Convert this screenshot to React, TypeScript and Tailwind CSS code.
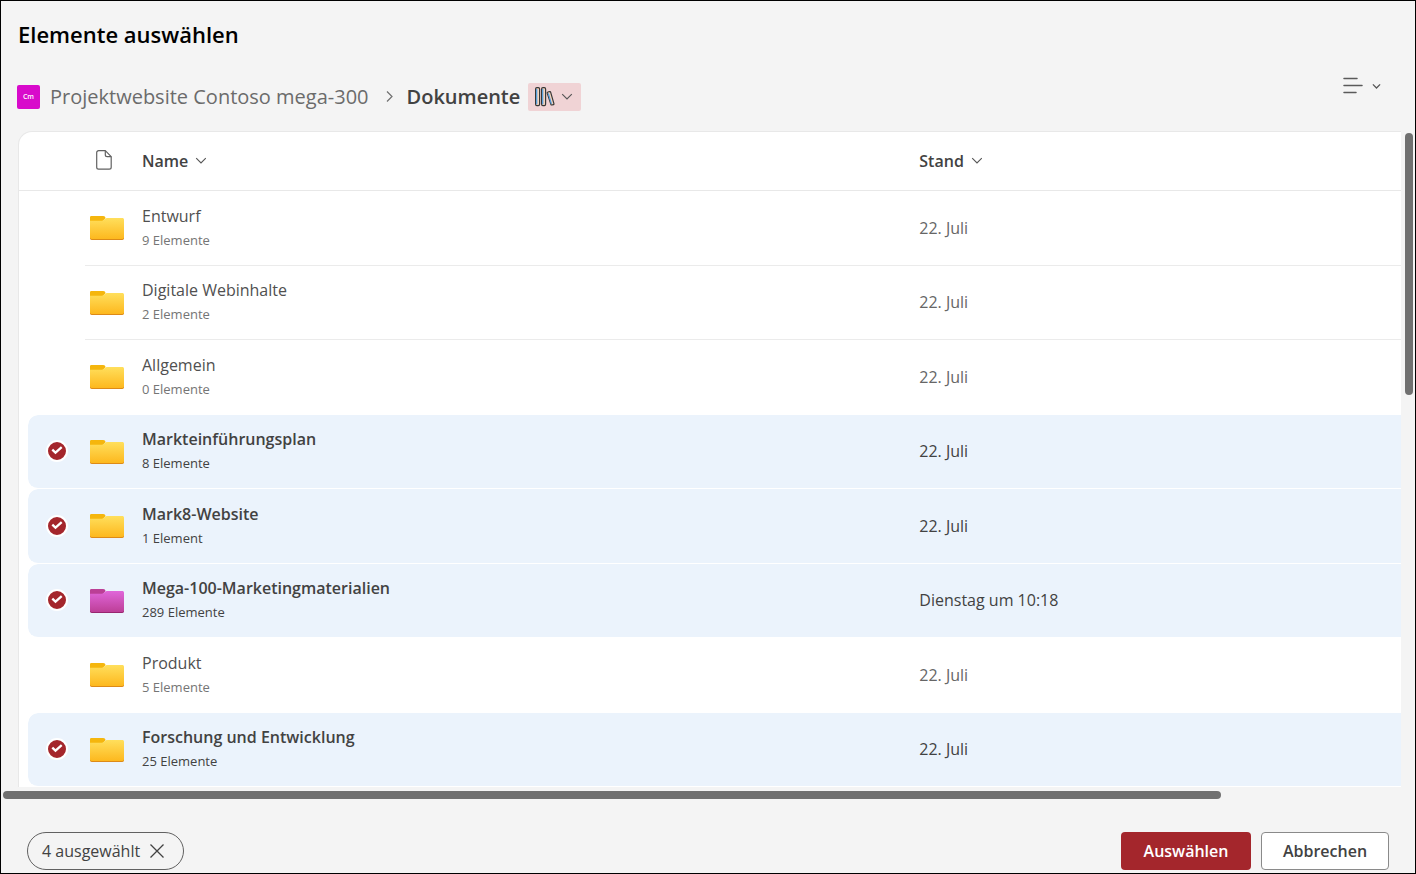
import { useState } from "react";

type Item = {
  name: string;
  count: string;
  modified: string;
  tint: "yellow" | "pink";
  selected: boolean;
};

const initialItems: Item[] = [
  { name: "Entwurf", count: "9 Elemente", modified: "22. Juli", tint: "yellow", selected: false },
  { name: "Digitale Webinhalte", count: "2 Elemente", modified: "22. Juli", tint: "yellow", selected: false },
  { name: "Allgemein", count: "0 Elemente", modified: "22. Juli", tint: "yellow", selected: false },
  { name: "Markteinführungsplan", count: "8 Elemente", modified: "22. Juli", tint: "yellow", selected: true },
  { name: "Mark8-Website", count: "1 Element", modified: "22. Juli", tint: "yellow", selected: true },
  { name: "Mega-100-Marketingmaterialien", count: "289 Elemente", modified: "Dienstag um 10:18", tint: "pink", selected: true },
  { name: "Produkt", count: "5 Elemente", modified: "22. Juli", tint: "yellow", selected: false },
  { name: "Forschung und Entwicklung", count: "25 Elemente", modified: "22. Juli", tint: "yellow", selected: true },
];

const folderColors = {
  yellow: { tab: "#f5b60d", top: "#ffdf5c", bottom: "#fdb81e", edge: "#dd8a17" },
  pink: { tab: "#bb3f96", top: "#e066da", bottom: "#bd3f97", edge: "#98256f" },
};

function FolderIcon({ tint }: { tint: "yellow" | "pink" }) {
  const c = folderColors[tint];
  return (
    <svg className="block" width="34" height="25" viewBox="0 0 34 25" aria-hidden="true">
      <defs>
        <linearGradient id={`folder-${tint}`} x1="0" y1="0" x2="0" y2="1">
          <stop offset="0" stopColor={c.top} />
          <stop offset="1" stopColor={c.bottom} />
        </linearGradient>
      </defs>
      <path d="M0 8V2.300C0 1.400.7.900 1.500.900h11.700c.6 0 1.200.2 1.600.7l.8 1.500L13 6Z" fill={c.tab} />
      <path d="M0 10h34v13.300c0 1-.7 1.700-1.700 1.700H1.700C.7 25 0 24.300 0 23.300Z" fill={c.edge} />
      <path
        d="M0 5.800h11.800c.7 0 1.200-.2 1.700-.7l1.700-1.400c.5-.5 1-.7 1.700-.7h15.400c1 0 1.700.7 1.700 1.700v17.600c0 1-.7 1.700-1.700 1.700H1.700C.7 24 0 23.300 0 22.300Z"
        fill={`url(#folder-${tint})`}
      />
    </svg>
  );
}

function Chevron({ size = 12, stroke = 1.1 }: { size?: number; stroke?: number }) {
  return (
    <svg width={size} height={size} viewBox="0 0 12 12" fill="none" stroke="#555" strokeWidth={stroke} aria-hidden="true">
      <path d="M1.200 3.200 6 8l4.800-4.800" />
    </svg>
  );
}

export default function App() {
  const [items, setItems] = useState(initialItems);
  const selectedCount = items.filter((i) => i.selected).length;
  const toggle = (index: number) =>
    setItems(items.map((item, i) => (i === index ? { ...item, selected: !item.selected } : item)));
  const clear = () => setItems(items.map((item) => ({ ...item, selected: false })));

  return (
    <main className="flex h-screen flex-col border border-black bg-[#f4f4f4] font-['Open_Sans','Noto_Sans',sans-serif] text-[#424242]">
      <header className="flex shrink-0 flex-col px-4 pt-[15px]">
        <h1 className="pl-px text-[22px] leading-9 font-semibold text-black">Elemente auswählen</h1>
        <div className="flex items-start justify-between pt-6 pr-[18px]">
          <nav aria-label="Pfad" className="flex h-[42px] items-center text-xl">
            <span className="mr-[10px] flex h-6 w-[23px] items-center justify-center rounded-xs bg-[#d80acb] text-[7px] font-semibold text-white">
              Cm
            </span>
            <a href="#" className="text-[#6b6b6b]">Projektwebsite Contoso mega-300</a>
            <svg className="mr-3 ml-4 text-[#707070]" width="10" height="14" viewBox="0 0 10 14" fill="none" stroke="currentColor" aria-hidden="true">
              <path d="m2 1.500 5 5-5 5" strokeWidth="1.200" />
            </svg>
            <span className="font-semibold">Dokumente</span>
            <button type="button" aria-label="Bibliothek wechseln" className="ml-2 flex h-7 w-[53px] items-center gap-[6px] rounded-xs bg-[#f0d3d5] pl-[7px]">
              <svg width="20" height="20" viewBox="0 0 20 20" fill="#f3d3bd" stroke="#383838" strokeWidth="1.200" aria-hidden="true">
                <rect x=".6" y=".6" width="4" height="18" rx="1.300" />
                <rect x="6.600" y=".6" width="4" height="18" rx="1.300" />
                <path d="m12.900 5 1.700-.4c.6-.1 1 .1 1.100.7l3.200 11.300c.1.600-.1 1-.7 1.100l-1.200.3c-.6.1-1-.1-1.100-.7L12.200 6.200c-.1-.6.1-1.100.7-1.200Z" />
                <path d="M1.700 2v15.200M7.700 2v15.200M13.300 6.300l3.100 10.500" stroke="#4c9ee3" />
              </svg>
              <Chevron />
            </button>
          </nav>
          <button type="button" aria-label="Ansichtsoptionen" className="flex h-5 items-center gap-[9px]">
            <svg width="20" height="18" viewBox="0 0 20 18" stroke="#5a5a5a" strokeWidth="1.500" strokeLinecap="round" aria-hidden="true">
              <path d="M1 1.500h13M1 8.500h18M1 15.500h12" />
            </svg>
            <Chevron size={9} stroke={1.7} />
          </button>
        </div>
      </header>

      <div className="flex min-h-0 flex-1 pt-[13px] pl-[17px]">
        <div className="min-w-0 flex-1 overflow-hidden rounded-tl-[14px] border-t border-l border-[#e8e8e8] bg-white">
          <table className="h-full w-full table-fixed border-separate border-spacing-0 text-left">
            <colgroup>
              <col className="w-[9px]" />
              <col className="w-[57px]" />
              <col className="w-[57px]" />
              <col />
              <col className="w-[35%]" />
            </colgroup>
            <thead>
              <tr className="h-[59px] [&>*]:border-b [&>*]:border-[#e8e8e8]">
                <td />
                <td />
                <th scope="col" aria-label="Dateityp" className="pb-[2px] pl-[11px]">
                  <svg className="block" width="16" height="20" viewBox="0 0 16 20" fill="none" stroke="#616161" strokeWidth="1.200" strokeLinejoin="round" aria-hidden="true">
                    <path d="M2.600.7h6.700l5.900 5.900v10.700c0 1-.8 1.900-1.900 1.900H2.600c-1 0-1.900-.9-1.900-1.900V2.600C.7 1.500 1.600.7 2.600.7Z" />
                    <path d="M9.300.7v4c0 1 .8 1.900 1.900 1.900h4" />
                  </svg>
                </th>
                <th scope="col">
                  <button type="button" className="flex items-center gap-[7px] text-base font-semibold">
                    Name
                    <Chevron />
                  </button>
                </th>
                <th scope="col" className="pl-[2px]">
                  <button type="button" className="flex items-center gap-[7px] text-base font-semibold">
                    Stand
                    <Chevron />
                  </button>
                </th>
              </tr>
            </thead>
            <tbody>
              {items.map((item, index) => {
                const next = items[index + 1];
                const line = !item.selected && next && !next.selected;
                const cell = item.selected
                  ? "border-b border-transparent bg-[#ebf3fc] bg-clip-padding"
                  : line
                    ? "border-b border-[#ebebeb]"
                    : "border-b border-transparent";
                return (
                  <tr key={item.name} className="h-[74px]">
                    <td />
                    <td
                      className={
                        item.selected
                          ? "rounded-l-[10px] border-b border-transparent bg-[#ebf3fc] bg-clip-padding pl-[18px]"
                          : "border-b border-transparent pl-[18px]"
                      }
                    >
                      <label className="relative block size-[22px]">
                        <input
                          type="checkbox"
                          aria-label={item.name}
                          checked={item.selected}
                          onChange={() => toggle(index)}
                          className="block size-[22px] appearance-none rounded-full border-2 border-transparent checked:border-white checked:bg-[#a4262c]"
                        />
                        {item.selected && (
                          <svg className="pointer-events-none absolute inset-0" width="22" height="22" viewBox="0 0 22 22" fill="none" stroke="#fff" strokeWidth="2.300" aria-hidden="true">
                            <path d="m6.300 9.600 3.200 3 6.200-5.500" />
                          </svg>
                        )}
                      </label>
                    </td>
                    <td className={`${cell} pl-[5px]`}>
                      <FolderIcon tint={item.tint} />
                    </td>
                    <td className={cell}>
                      <div className={item.selected ? "text-base leading-6 font-semibold" : "text-base leading-6 text-[#505050]"}>{item.name}</div>
                      <div className={item.selected ? "text-[13px] leading-6" : "text-[13px] leading-6 text-[#757575]"}>{item.count}</div>
                    </td>
                    <td className={`${cell} pl-[2px] text-base ${item.selected ? "" : "text-[#666666]"}`}>{item.modified}</td>
                  </tr>
                );
              })}
            </tbody>
          </table>
        </div>
        <div className="w-[14px] shrink-0 pt-[2px] pl-1">
          <div className="h-[40%] w-2 rounded-full bg-[#707070]" />
        </div>
      </div>

      <div className="shrink-0 px-[2px] pt-1">
        <div className="h-2 w-[86.400%] rounded-full bg-[#707070]" />
      </div>

      <footer className="flex shrink-0 items-center justify-between pt-[33px] pr-[26px] pb-[3px] pl-[26px]">
        <button type="button" onClick={clear} className="flex h-[38px] items-center gap-[9px] rounded-full border border-[#616161] pr-[18px] pl-[14px] text-base">
          {selectedCount} ausgewählt
          <svg width="16" height="16" viewBox="0 0 16 16" stroke="currentColor" strokeWidth="1.300" aria-hidden="true">
            <path d="m1.500 1.500 13 13m0-13-13 13" />
          </svg>
        </button>
        <div className="flex gap-[10px]">
          <button type="button" className="h-[38px] w-[130px] rounded-sm bg-[#a4262c] text-base font-semibold text-white">Auswählen</button>
          <button type="button" className="h-[38px] w-32 rounded-sm border border-[#8a8a8a] bg-white text-base font-semibold">Abbrechen</button>
        </div>
      </footer>
    </main>
  );
}
